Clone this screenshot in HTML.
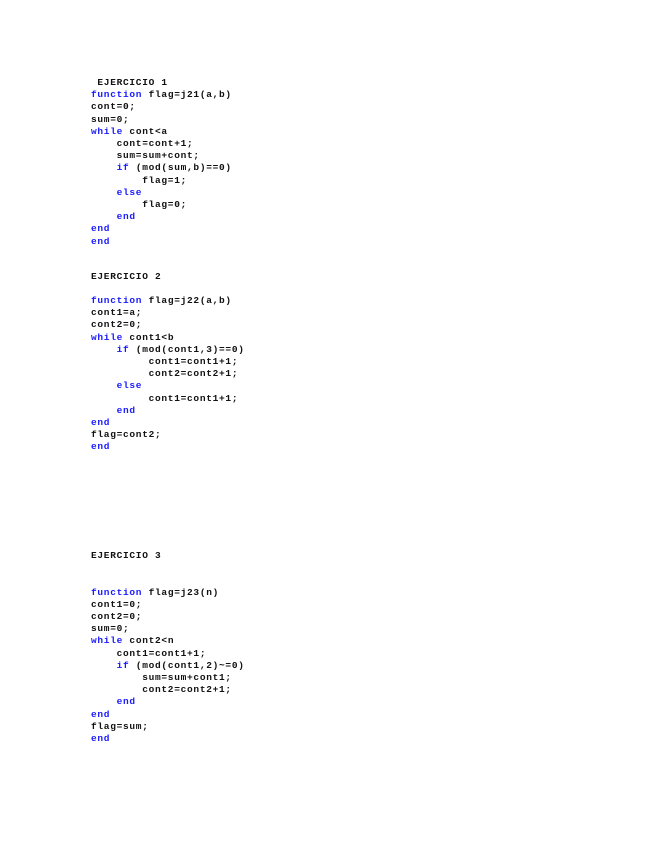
<!DOCTYPE html>
<html><head><meta charset="utf-8"><style>
html,body{margin:0;padding:0;background:#fff;width:655px;height:848px;overflow:hidden}
pre{position:absolute;left:91px;margin:0;font-family:"Liberation Mono",monospace;font-weight:bold;font-size:9.5px;letter-spacing:0.7px;line-height:12.2px;color:#111}
b{color:#1a1aff;font-weight:bold}
</style></head><body>
<pre style="top:77px"> EJERCICIO 1
<b>function</b> flag=j21(a,b)
cont=0;
sum=0;
<b>while</b> cont&lt;a
    cont=cont+1;
    sum=sum+cont;
    <b>if</b> (mod(sum,b)==0)
        flag=1;
    <b>else</b>
        flag=0;
    <b>end</b>
<b>end</b>
<b>end</b></pre>
<pre style="top:270.5px">EJERCICIO 2

<b>function</b> flag=j22(a,b)
cont1=a;
cont2=0;
<b>while</b> cont1&lt;b
    <b>if</b> (mod(cont1,3)==0)
         cont1=cont1+1;
         cont2=cont2+1;
    <b>else</b>
         cont1=cont1+1;
    <b>end</b>
<b>end</b>
flag=cont2;
<b>end</b></pre>
<pre style="top:549.5px">EJERCICIO 3</pre>
<pre style="top:586.5px"><b>function</b> flag=j23(n)
cont1=0;
cont2=0;
sum=0;
<b>while</b> cont2&lt;n
    cont1=cont1+1;
    <b>if</b> (mod(cont1,2)~=0)
        sum=sum+cont1;
        cont2=cont2+1;
    <b>end</b>
<b>end</b>
flag=sum;
<b>end</b></pre>
</body></html>
